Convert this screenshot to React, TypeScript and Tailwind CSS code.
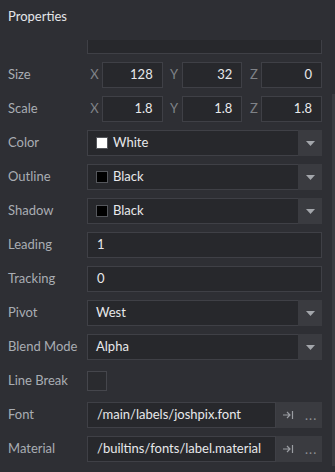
import React from "react";

const FONT = { fontFamily: "Lato, 'Open Sans', sans-serif" };

function Label({ text }: { text: string }) {
  return <div className="w-[87px] shrink-0 pl-[8px] text-[#a9adb3]">{text}</div>;
}

function Row({ label, children }: { label: string; children?: React.ReactNode }) {
  return (
    <div className="flex items-center h-[26px] mt-[8px]">
      <Label text={label} />
      <div className="flex-1 mr-[13px] h-full flex">{children}</div>
    </div>
  );
}

function Vec({ vals }: { vals: string[] }) {
  const axes = ["X", "Y", "Z"];
  return (
    <div className="flex gap-[4px] w-full h-full">
      {vals.map((v, i) => (
        <div key={i} className="flex-1 flex items-center">
          <div className="w-[15px] text-center text-[#7f8287]">{axes[i]}</div>
          <div className="flex-1 h-full border border-[#3f4046] bg-[#27282c] flex items-center justify-end pr-[9px] text-[#e8e9eb]">
            {v}
          </div>
        </div>
      ))}
    </div>
  );
}

function TextField({ value }: { value: string }) {
  return (
    <div className="w-full h-full border border-[#3f4046] bg-[#27282c] flex items-center pl-[9px] text-[#e8e9eb]">
      {value}
    </div>
  );
}

function Arrow() {
  return (
    <svg width="9" height="5" viewBox="0 0 9 5">
      <path d="M0 0 L9 0 L4.5 5 Z" fill="#a3a6ab" />
    </svg>
  );
}

function Select({ value, swatch }: { value: string; swatch?: string }) {
  return (
    <div className="w-full h-full flex">
      <div className="flex-1 h-full border border-[#3f4046] border-r-0 bg-[#27282c] flex items-center pl-[8px] text-[#e8e9eb]">
        {swatch && (
          <div className="w-[12px] h-[12px] border border-[#55575c] mr-[5px]" style={{ background: swatch }} />
        )}
        {value}
      </div>
      <div className="w-[24px] h-full bg-[#3a3b40] flex items-center justify-center">
        <Arrow />
      </div>
    </div>
  );
}

function Resource({ value }: { value: string }) {
  return (
    <div className="w-full h-full flex">
      <div className="flex-1 h-full border border-[#3f4046] bg-[#27282c] flex items-center pl-[9px] text-[#e8e9eb] whitespace-nowrap overflow-hidden">
        {value}
      </div>
      <div className="w-[46px] h-full bg-[#3a3b40] flex items-center pl-[7px] gap-[11px]">
        <svg width="11" height="10" viewBox="0 0 11 10" fill="none" stroke="#9a9da2" strokeWidth="1.2">
          <path d="M0 5 H7 M4 2 L7 5 L4 8 M9.5 1 V9" />
        </svg>
        <span className="text-[#8d9095] tracking-[1px] leading-none">...</span>
      </div>
    </div>
  );
}

export default function App() {
  return (
    <div className="w-[335px] h-[472px] bg-[#2e2f34] relative overflow-hidden text-[13px]" style={FONT}>
      <div className="h-[40px] flex items-center pl-[8px] text-[#e4e6e9] pb-[6px]">Properties</div>
      <div className="flex">
        <div className="w-[87px]" />
        <div className="flex-1 mr-[13px] h-[14px] border border-t-0 border-[#3f4046] bg-[#27282c]" />
      </div>
      <Row label="Size">
        <Vec vals={["128", "32", "0"]} />
      </Row>
      <Row label="Scale">
        <Vec vals={["1.8", "1.8", "1.8"]} />
      </Row>
      <Row label="Color">
        <Select value="White" swatch="#ffffff" />
      </Row>
      <Row label="Outline">
        <Select value="Black" swatch="#000000" />
      </Row>
      <Row label="Shadow">
        <Select value="Black" swatch="#000000" />
      </Row>
      <Row label="Leading">
        <TextField value="1" />
      </Row>
      <Row label="Tracking">
        <TextField value="0" />
      </Row>
      <Row label="Pivot">
        <Select value="West" />
      </Row>
      <Row label="Blend Mode">
        <Select value="Alpha" />
      </Row>
      <Row label="Line Break">
        <div className="h-full flex items-center">
          <div className="w-[20px] h-[20px] border border-[#45464c] bg-[#2a2b2f]" />
        </div>
      </Row>
      <Row label="Font">
        <Resource value="/main/labels/joshpix.font" />
      </Row>
      <Row label="Material">
        <Resource value="/builtins/fonts/label.material" />
      </Row>
      <div className="absolute right-0 top-[94px] w-[3px] h-[372px] bg-[#3a3b40]" />
    </div>
  );
}
